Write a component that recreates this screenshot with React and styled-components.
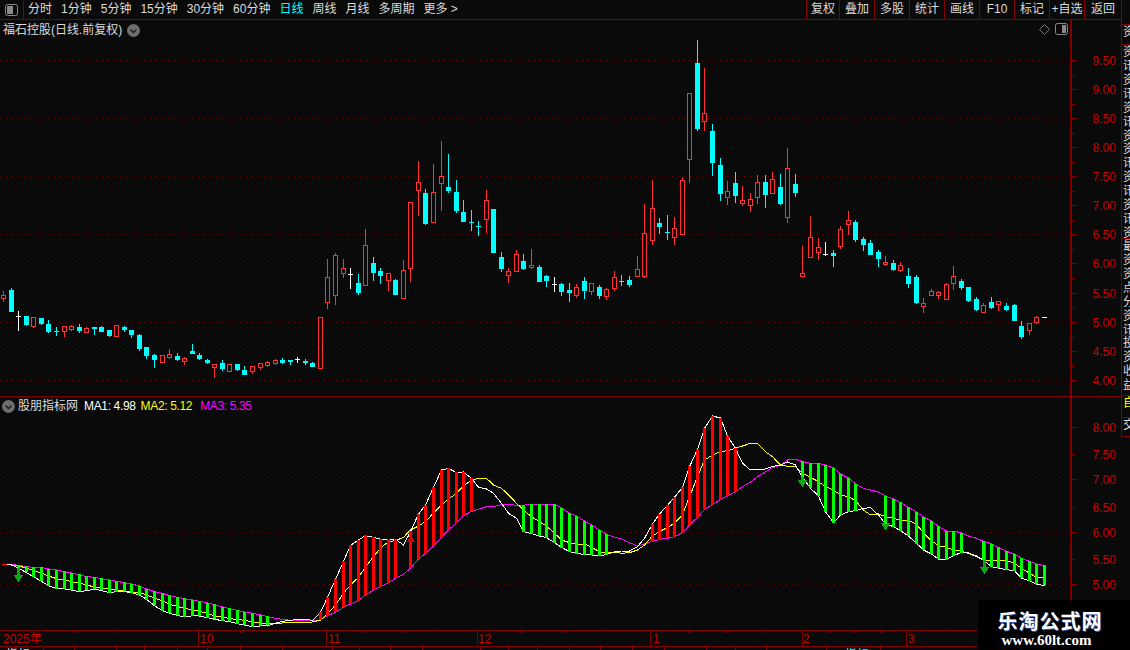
import React from 'react';
import styled, { createGlobalStyle } from 'styled-components';

const LINE = '#800000';
const AXIS_RED = '#c80000';
const FONT = '"Liberation Sans", "Noto Sans CJK SC", sans-serif';

// [type, wickTop, bodyTop, bodyBottom, wickBottom]  r: hollow red, c: solid cyan, w: white doji
const CANDLES = [
  ['r', 291, 295, 298, 301], ['c', 288, 290, 311, 311], ['w', 311, 316, 316, 330], ['c', 316, 316, 324, 325],
  ['r', 317, 317, 326, 327], ['c', 318, 318, 323, 324], ['c', 320, 324, 331, 332], ['c', 327, 331, 331, 335],
  ['r', 326, 326, 331, 336], ['r', 325, 326, 329, 330], ['c', 324, 327, 330, 332], ['r', 327, 328, 332, 332],
  ['c', 327, 327, 328, 334], ['c', 326, 327, 331, 331], ['c', 330, 330, 335, 336], ['r', 325, 325, 336, 336],
  ['c', 326, 327, 329, 331], ['c', 330, 330, 334, 337], ['c', 334, 335, 348, 350], ['c', 347, 347, 355, 358],
  ['c', 354, 355, 359, 367], ['r', 355, 355, 362, 362], ['r', 349, 354, 357, 358], ['c', 353, 356, 359, 360],
  ['r', 357, 358, 361, 364], ['c', 344, 351, 353, 353], ['c', 353, 355, 358, 359], ['c', 359, 360, 362, 363],
  ['r', 364, 364, 367, 377], ['c', 360, 363, 368, 370], ['r', 364, 364, 371, 371], ['c', 364, 364, 369, 370],
  ['c', 366, 370, 374, 374], ['r', 366, 366, 371, 373], ['r', 363, 363, 367, 369], ['r', 361, 362, 365, 366],
  ['r', 359, 360, 363, 364], ['c', 358, 360, 362, 363], ['c', 360, 360, 361, 364], ['w', 357, 359, 359, 362],
  ['c', 359, 361, 362, 364], ['c', 362, 363, 366, 366], ['r', 317, 317, 368, 368], ['r', 259, 277, 302, 308],
  ['r', 253, 255, 295, 304], ['r', 259, 268, 273, 277], ['w', 268, 274, 274, 288], ['c', 274, 283, 292, 294],
  ['r', 229, 245, 285, 285], ['c', 257, 263, 272, 280], ['c', 268, 271, 275, 283], ['r', 273, 273, 280, 290],
  ['c', 279, 280, 294, 294], ['r', 260, 270, 298, 298], ['r', 202, 202, 268, 281], ['r', 161, 182, 190, 215],
  ['c', 189, 193, 223, 224], ['r', 164, 192, 222, 222], ['r', 141, 176, 183, 210], ['c', 154, 187, 190, 192],
  ['c', 180, 192, 210, 212], ['c', 200, 212, 221, 221], ['c', 210, 222, 222, 230], ['c', 221, 226, 226, 235],
  ['r', 190, 200, 219, 232], ['c', 209, 209, 252, 252], ['c', 252, 257, 268, 271], ['r', 268, 271, 275, 282],
  ['r', 250, 254, 271, 271], ['c', 254, 261, 268, 269], ['r', 249, 265, 267, 268], ['c', 265, 267, 281, 281],
  ['c', 275, 276, 280, 286], ['w', 277, 284, 284, 291], ['c', 283, 284, 291, 295], ['c', 283, 290, 292, 301],
  ['r', 284, 287, 295, 297], ['c', 277, 281, 290, 298], ['r', 283, 283, 291, 294], ['c', 285, 287, 295, 298],
  ['r', 288, 289, 296, 299], ['r', 271, 277, 288, 290], ['c', 275, 281, 281, 285], ['c', 276, 280, 284, 286],
  ['r', 256, 269, 276, 276], ['r', 204, 233, 276, 277], ['r', 180, 208, 240, 244], ['c', 218, 223, 226, 233],
  ['c', 215, 232, 232, 239], ['r', 217, 228, 237, 244], ['r', 177, 180, 234, 234], ['r', 93, 93, 159, 182],
  ['c', 40, 63, 128, 130], ['r', 68, 113, 121, 130], ['c', 124, 131, 162, 175], ['c', 158, 165, 193, 200],
  ['r', 181, 191, 197, 204], ['c', 172, 183, 195, 202], ['r', 186, 200, 203, 205], ['r', 193, 199, 205, 211],
  ['r', 175, 182, 197, 203], ['c', 175, 182, 194, 207], ['r', 172, 179, 193, 193], ['c', 174, 187, 203, 204],
  ['r', 148, 168, 217, 222], ['c', 174, 184, 192, 196], ['r', 246, 273, 276, 276], ['r', 216, 237, 257, 257],
  ['r', 238, 247, 252, 259], ['w', 242, 254, 254, 255], ['c', 250, 253, 255, 266], ['r', 226, 229, 246, 248],
  ['r', 211, 220, 224, 234], ['c', 220, 222, 239, 241], ['c', 237, 239, 244, 250], ['c', 240, 243, 254, 254],
  ['c', 250, 252, 258, 266], ['r', 256, 262, 264, 265], ['c', 260, 263, 269, 270], ['r', 262, 265, 270, 271],
  ['c', 268, 276, 283, 287], ['c', 275, 277, 302, 303], ['r', 298, 303, 306, 312], ['r', 289, 291, 295, 295],
  ['r', 291, 292, 295, 298], ['r', 283, 284, 299, 299], ['r', 266, 276, 283, 289], ['c', 279, 281, 287, 289],
  ['c', 287, 287, 300, 301], ['c', 297, 299, 309, 310], ['r', 303, 305, 312, 312], ['c', 297, 302, 307, 308],
  ['r', 301, 301, 304, 310], ['c', 303, 306, 309, 310], ['c', 304, 305, 320, 320], ['c', 321, 326, 336, 338],
  ['r', 323, 323, 330, 334], ['r', 316, 317, 322, 323], ['w', 317, 317, 317, 317],
];

const MA1 = [
  564, 565, 568, 572.7, 576.7, 581.3, 585.7, 588.7, 589, 590, 591.7, 590.7, 589, 590.7, 592.7, 591.7, 591.7, 592.7, 595, 599.3,
  605.7, 610.7, 613.3, 615.3, 617, 615.7, 616, 617.7, 619.3, 620.7, 621.7, 623.7, 625, 626.7, 626, 625.7, 623.3, 621.3, 620.3, 619.3,
  619.3, 620.3, 612.3, 597.3, 579.3, 561.3, 545.3, 540, 535.7, 537.3, 539.3, 539.3, 539.3, 545, 531.7, 514, 505, 487.3, 470, 468.3,
  472.7, 472, 478.3, 487.3, 489, 493.3, 503.3, 513.3, 518.3, 531.7, 533.7, 536, 537.7, 542.7, 547.3, 551.7, 553.3, 554.7, 555, 555.7,
  554.7, 551.7, 551, 551, 546.7, 538.3, 524, 514, 505.3, 497.3, 487.3, 466.7, 449.3, 428.3, 416, 418, 436, 448.3, 463.3, 470,
  469.3, 469, 466.3, 465.3, 462, 465, 477.3, 488.3, 496, 511.7, 522.7, 515, 511.7, 510.7, 508.3, 507.7, 515, 524, 526.7, 530.7,
  536, 543.3, 550, 554, 559.3, 559.3, 555.7, 552.3, 553, 556, 560.3, 566.7, 568, 569.7, 570.7, 578.3, 580.7, 584, 585.7,
];

const MA2 = [
  564, 565, 566, 568, 570.7, 573, 576, 578.7, 580, 581.7, 583, 585, 587, 588, 589.3, 590, 591, 592, 592.3, 595,
  598, 601, 604.3, 606.5, 608.3, 610, 611.3, 613.5, 615.7, 617, 618.7, 619.5, 620.3, 622, 623, 623.7, 623.3, 623, 622.7, 622.7,
  622.7, 622, 620, 614, 605, 593.3, 585, 577.3, 567, 556.7, 548, 541.7, 540.7, 537.3, 530, 526, 521.7, 513, 505, 499,
  493.3, 486, 480, 478.3, 478.3, 485, 488.3, 495, 503.3, 510, 516.7, 521.7, 526, 533.3, 540, 542.7, 544, 544, 547.3, 551.7,
  553.3, 552, 553.3, 552.7, 550, 545, 536, 531.7, 527.3, 523.3, 515, 496.7, 476.7, 460, 455, 451.7, 450.7, 448.3, 446, 443.3,
  443.3, 451.7, 456.7, 465, 466.3, 466.3, 473.3, 477.3, 481.7, 486.7, 490, 495, 496.7, 500.7, 510, 515, 514, 516.7, 518.3, 520,
  520.7, 524, 533.3, 540.7, 545.7, 547.3, 550, 551.3, 553.3, 556.7, 560, 560.3, 560.3, 560.3, 563.3, 568.3, 573.3, 577.3, 577.3,
];

const MA3 = [
  564, 564.3, 565.3, 566.7, 567.3, 567.3, 569, 570, 571.7, 573, 574.7, 576.7, 577.3, 578.7, 580, 581.3, 582.7, 584, 586, 589,
  591.7, 593.3, 595.7, 597.3, 598.7, 600, 601.3, 603, 604.7, 607, 608.7, 610.3, 612, 613.3, 615, 616.7, 618.3, 619.3, 620.3, 620.3,
  620.3, 621, 620, 615.7, 612.3, 607.3, 604, 600.7, 595, 590.3, 586.7, 582.7, 578.3, 574.3, 568.3, 559, 553.3, 546, 537.3, 530,
  522.7, 515.7, 511.3, 509.3, 506.7, 506.7, 504.7, 504.3, 505.3, 505.3, 504, 504, 504, 504, 508, 513.3, 516, 521, 525, 530,
  534.3, 537.3, 538.7, 542.7, 546, 544, 541.3, 539.3, 538.3, 536.7, 532.7, 525, 517.3, 509.3, 504.7, 499.3, 495.7, 491.7, 486.7, 482,
  476.7, 471.7, 467.7, 465, 460, 459.3, 461.7, 463.3, 463.3, 465, 468, 474, 478, 484, 488.3, 490, 492, 496, 499, 502.7,
  507.3, 512, 517, 521, 526.7, 531, 531, 533, 536, 538.3, 541.3, 544, 547.7, 551.3, 554, 558.3, 561.3, 564, 565.7,
];

// inclusive candle indexes that carry a bar between MA1 and MA3
const BAR_RANGES = [
  ['#00ff00', 2, 35], ['#ff0000', 42, 52], ['#ff0000', 54, 62], ['#00ff00', 69, 80], ['#ff0000', 86, 97],
  ['#00ff00', 106, 113], ['#00ff00', 117, 127], ['#00ff00', 130, 138],
];

const DOWN_ARROWS = [[18, 568, 575], [802, 463, 480], [885, 513, 523], [984, 543, 567]];

const PRICE_TICKS = [
  ['9.50', 60], ['9.00', 89], ['8.50', 118], ['8.00', 147], ['7.50', 176], ['7.00', 205],
  ['6.50', 234], ['6.00', 263], ['5.50', 293], ['5.00', 322], ['4.50', 351], ['4.00', 380],
];
const INDICATOR_TICKS = [
  ['8.00', 427, true], ['7.50', 454, false], ['7.00', 479, true], ['6.50', 507, false],
  ['6.00', 532, true], ['5.50', 559, false], ['5.00', 584, true],
];

const TIME_LABELS = [['2025年', 3, 0], ['10', 200, 198], ['11', 328, 326], ['12', 478, 477], ['1', 653, 650], ['2', 803, 802], ['3', 908, 906]];
const TIME_TICKS = [74, 115, 157, 240, 283, 364, 402, 439, 520, 564, 607, 688, 726, 763, 830, 854, 880, 949];
const BOTTOM_TICKS = [43, 74, 116, 144, 177, 207, 240, 282, 332, 359, 390, 422, 480, 508, 537, 569, 600, 632, 664, 706, 735, 766, 826, 854, 880];

const PERIODS = ['分时', '1分钟', '5分钟', '15分钟', '30分钟', '60分钟', '日线', '周线', '月线', '多周期', '更多 >'];
const ACTIONS = [['复权', 33], ['叠加', 35], ['多股', 35], ['统计', 35], ['画线', 35], ['F10', 35], ['标记', 35], ['+自选', 35], ['返回', 37]];
const SIDE_CELLS = [
  ['资', 20], ['资讯资讯资讯资', 97], ['资讯资讯资讯资', 97], ['最资资点分资讯', 97], ['投资收益', 60],
];

const candleX = (i) => Math.round(3.2 + 7.54 * i);

const GlobalStyle = createGlobalStyle`
  html, body {
    margin: 0;
    padding: 0;
    background: #0a0a0a;
  }
`;

const Page = styled.div`
  position: relative;
  display: flex;
  width: 1130px;
  height: 650px;
  overflow: hidden;
  background: #0a0a0a;
  font-family: ${FONT};
  font-size: 12px;
  color: #dcdcdc;
`;

const Main = styled.div`
  display: flex;
  flex-direction: column;
  width: 1121px;
`;

const Toolbar = styled.div`
  display: flex;
  align-items: stretch;
  height: 19px;
  border-bottom: 1px solid ${LINE};
  line-height: 18px;
  white-space: nowrap;
`;

const ToggleCell = styled.div`
  display: flex;
  align-items: center;
  justify-content: center;
  width: 23px;
  border-right: 1px solid ${LINE};
  margin-right: 4px;
`;

const Periods = styled.div`
  display: flex;
  gap: 9px;
`;

const Period = styled.span`
  color: ${(p) => (p.$active ? '#00ffff' : '#dcdcdc')};
`;

const Actions = styled.div`
  display: flex;
  margin-left: auto;
`;

const Action = styled.div`
  width: ${(p) => p.$width}px;
  border-left: 1px solid ${LINE};
  text-align: center;
  box-sizing: border-box;
`;

const Pane = styled.div`
  position: relative;
  box-sizing: border-box;
  height: ${(p) => p.$height}px;
  border-bottom: ${(p) => (p.$divided ? `1px solid ${LINE}` : 'none')};
`;

const ChartSvg = styled.svg`
  display: block;
  shape-rendering: crispEdges;
`;

const AxisText = styled.text`
  fill: ${AXIS_RED};
  font-family: ${FONT};
  font-size: 12px;
`;

const PaneTitle = styled.div`
  position: absolute;
  top: ${(p) => p.$top}px;
  left: ${(p) => p.$left}px;
  display: flex;
  align-items: center;
  line-height: 14px;
  white-space: nowrap;
`;

const TitleName = styled.span`
  color: #dcdcdc;
  margin: 0 ${(p) => p.$after || 0}px 0 ${(p) => p.$before || 0}px;
`;

const MaValue = styled.span`
  color: ${(p) => p.$color};
  margin-right: ${(p) => p.$gap || 0}px;
  letter-spacing: -0.35px;
`;

const PaneIcons = styled.div`
  position: absolute;
  top: 3px;
  right: 53px;
  display: flex;
  align-items: center;
  gap: 5px;
`;

const BottomRow = styled.div`
  position: relative;
  flex: 1;
  overflow: hidden;
`;

const BottomText = styled.span`
  position: absolute;
  top: 1px;
  left: ${(p) => p.$left}px;
  line-height: 14px;
  color: ${(p) => p.$color};
`;

const SideStrip = styled.div`
  display: flex;
  flex-direction: column;
  width: 8px;
  height: 437px;
  border-left: 1px solid ${LINE};
  overflow: hidden;
`;

const SideTop = styled.div`
  height: 25px;
  flex: none;
  border-bottom: 1px solid ${LINE};
  box-sizing: border-box;
`;

const SideCell = styled.div`
  flex: none;
  width: 12px;
  height: ${(p) => p.$height}px;
  box-sizing: border-box;
  border-bottom: 1px solid ${LINE};
  overflow: hidden;
  padding-left: 1px;
  font-size: 12px;
  line-height: 14px;
  color: ${(p) => p.$color || '#dcdcdc'};
`;

const Watermark = styled.div`
  position: absolute;
  right: 0;
  bottom: 0;
  width: 152px;
  height: 50px;
  background: #000;
  color: #fff;
  text-align: center;
  font-weight: 700;
`;

const WatermarkTitle = styled.div`
  margin: 9px 8px 0 0;
  font-size: 20px;
  line-height: 23px;
  letter-spacing: 1px;
  font-family: "Noto Sans CJK SC", sans-serif;
  text-shadow: 1px 1px 0 #3050a0;
`;

const WatermarkUrl = styled.div`
  margin: 1px 15px 0 0;
  font-family: "Liberation Serif", serif;
  font-size: 15px;
  line-height: 15px;
`;

function PanelIcon() {
  return (
    <svg width="13" height="12" viewBox="0 0 13 12">
      <rect x="0.5" y="0.5" width="12" height="11" rx="2" fill="none" stroke="#8a8a8a" />
      <rect x="7" y="2" width="4" height="8" fill="#8a8a8a" />
    </svg>
  );
}

function ToggleIcon() {
  return (
    <svg width="13" height="12" viewBox="0 0 13 12">
      <rect x="0.5" y="0.5" width="12" height="11" rx="2" fill="none" stroke="#8a8a8a" />
      <rect x="2" y="2" width="6" height="8" fill="#8a8a8a" />
    </svg>
  );
}

function DiamondIcon() {
  return (
    <svg width="11" height="11" viewBox="0 0 11 11">
      <path d="M5.5 0.5 L10.5 5.5 L5.5 10.5 L0.5 5.5 Z" fill="none" stroke="#7a7a7a" />
    </svg>
  );
}

function ChevronBadge() {
  return (
    <svg width="13" height="13" viewBox="0 0 13 13">
      <circle cx="6.5" cy="6.5" r="6.5" fill="#6e6e6e" />
      <path d="M3.5 5.5 L6.5 8.5 L9.5 5.5" fill="none" stroke="#1c1c1c" strokeWidth="1.4" />
    </svg>
  );
}

function Grid({ rows }) {
  return rows.map((y) => (
    <line key={y} x1="0" x2="1067" y1={y + 0.5} y2={y + 0.5} stroke="#600000" strokeDasharray="1 5" />
  ));
}

function Axis({ ticks, minor, top, bottom }) {
  return (
    <>
      <rect x="1070" y={top} width="2" height={bottom - top} fill={LINE} />
      {ticks.map(([label, y, major = true]) => (
        <g key={label}>
          <rect x="1072" y={y} width={major ? 5 : 3} height="1" fill={LINE} />
          <AxisText x="1092.5" y={y + 5}>{label}</AxisText>
        </g>
      ))}
      {minor.map((y) => (
        <rect key={y} x="1072" y={y} width="3" height="1" fill={LINE} />
      ))}
    </>
  );
}

function Candle({ index, data }) {
  const [type, wickTop, bodyTop, bodyBottom, wickBottom] = data;
  const x = candleX(index);
  const color = { r: '#ff3232', c: '#00ffff', w: '#ffffff' }[type];
  const wick = (y1, y2) => (y2 > y1 ? <rect x={x} y={y1} width="1" height={y2 - y1} fill={color} /> : null);

  if (bodyBottom === bodyTop) {
    return (
      <g>
        {wick(wickTop, wickBottom + 1)}
        <rect x={x - 2} y={bodyTop} width="5" height="1" fill={color} />
      </g>
    );
  }
  if (type === 'r') {
    return (
      <g>
        {wick(wickTop, bodyTop)}
        {wick(bodyBottom, wickBottom + 1)}
        <rect x={x - 1.5} y={bodyTop + 0.5} width="4" height={bodyBottom - bodyTop} fill="#0a0a0a" stroke={color} />
      </g>
    );
  }
  return (
    <g>
      {wick(wickTop, wickBottom + 1)}
      <rect x={x - 2} y={bodyTop} width="5" height={bodyBottom - bodyTop + 1} fill={color} />
    </g>
  );
}

function MaLine({ values, color }) {
  const points = values.map((y, i) => `${candleX(i) + 0.5},${y}`).join(' ');
  return <polyline points={points} fill="none" stroke={color} strokeWidth="1" />;
}

function PriceChart() {
  return (
    <ChartSvg width="1121" height="376" viewBox="0 20 1121 376">
      <Grid rows={PRICE_TICKS.map((t) => t[1])} />
      {CANDLES.map((c, i) => (
        <Candle key={i} index={i} data={c} />
      ))}
      <Axis
        ticks={PRICE_TICKS}
        minor={[75, 104, 133, 162, 191, 220, 249, 278, 307, 337, 366]}
        top={20}
        bottom={396}
      />
    </ChartSvg>
  );
}

function IndicatorChart() {
  const bars = [];
  BAR_RANGES.forEach(([color, from, to]) => {
    for (let i = from; i <= to; i += 1) {
      const y = Math.floor(Math.min(MA1[i], MA3[i]));
      bars.push(
        <rect key={i} x={candleX(i) - 1} y={y} width="3" height={Math.ceil(Math.abs(MA1[i] - MA3[i]))} fill={color} />,
      );
    }
  });

  return (
    <ChartSvg width="1121" height="233" viewBox="0 397 1121 233">
      <Grid rows={[427, 479, 532, 584]} />
      <MaLine values={MA3} color="#ff00ff" />
      <MaLine values={MA2} color="#ffff00" />
      <MaLine values={MA1} color="#ffffff" />
      <rect x="2" y="564" width="5" height="1" fill="#ff0000" />
      {DOWN_ARROWS.map(([x, stemTop, headTop]) => (
        <g key={x} fill="#10a810">
          <rect x={x - 1} y={stemTop} width="3" height={headTop - stemTop} />
          <path d={`M${x - 4.5} ${headTop} H${x + 5.5} L${x + 0.5} ${headTop + 7} Z`} />
        </g>
      ))}
      {bars}
      <path d="M406.5 542 H415.5 L411 536 Z" fill="#d00000" />
      <Axis ticks={INDICATOR_TICKS} minor={[]} top={397} bottom={630} />
    </ChartSvg>
  );
}

function TimeAxis() {
  return (
    <ChartSvg width="1121" height="17" viewBox="0 630 1121 17">
      <rect x="0" y="630" width="1121" height="1" fill={LINE} />
      <rect x="0" y="646" width="1121" height="1" fill={LINE} />
      {TIME_TICKS.map((x) => (
        <rect key={x} x={x} y="631" width="1" height="2" fill={LINE} />
      ))}
      {TIME_LABELS.map(([label, x, line]) => (
        <g key={label}>
          {line > 0 && <rect x={line} y="631" width="1" height="15" fill={LINE} />}
          <AxisText x={x} y="643">{label}</AxisText>
        </g>
      ))}
    </ChartSvg>
  );
}

function BottomTicks() {
  return (
    <ChartSvg width="1121" height="3" viewBox="0 647 1121 3">
      {BOTTOM_TICKS.map((x) => (
        <rect key={x} x={x} y="647" width="1" height="3" fill={LINE} />
      ))}
    </ChartSvg>
  );
}

export default function App() {
  return (
    <Page>
      <GlobalStyle />
      <Main>
        <Toolbar>
          <ToggleCell>
            <ToggleIcon />
          </ToggleCell>
          <Periods>
            {PERIODS.map((p) => (
              <Period key={p} $active={p === '日线'}>{p}</Period>
            ))}
          </Periods>
          <Actions>
            {ACTIONS.map(([label, width]) => (
              <Action key={label} $width={width}>{label}</Action>
            ))}
          </Actions>
        </Toolbar>
        <Pane $height={377} $divided>
          <PriceChart />
          <PaneTitle $top={3} $left={3}>
            <TitleName $after={5}>福石控股(日线.前复权)</TitleName>
            <ChevronBadge />
          </PaneTitle>
          <PaneIcons>
            <DiamondIcon />
            <PanelIcon />
          </PaneIcons>
        </Pane>
        <Pane $height={233}>
          <IndicatorChart />
          <PaneTitle $top={2} $left={2}>
            <ChevronBadge />
            <TitleName $before={3} $after={6}>股朋指标网</TitleName>
            <MaValue $color="#ffffff" $gap={5}>MA1: 4.98</MaValue>
            <MaValue $color="#ffff00" $gap={8}>MA2: 5.12</MaValue>
            <MaValue $color="#ff00ff">MA3: 5.35</MaValue>
          </PaneTitle>
        </Pane>
        <TimeAxis />
        <BottomRow>
          <BottomTicks />
          <BottomText $left={6} $color="#dcdcdc">指标</BottomText>
          <BottomText $left={845} $color="#00ffff">指标</BottomText>
        </BottomRow>
      </Main>
      <SideStrip>
        <SideTop />
        {SIDE_CELLS.map(([text, height], i) => (
          <SideCell key={i} $height={height}>{text}</SideCell>
        ))}
        <SideCell $height={22} $color="#ffff00">自</SideCell>
        <SideCell $height={19}>交</SideCell>
      </SideStrip>
      <Watermark>
        <WatermarkTitle>乐淘公式网</WatermarkTitle>
        <WatermarkUrl>www.60lt.com</WatermarkUrl>
      </Watermark>
    </Page>
  );
}
